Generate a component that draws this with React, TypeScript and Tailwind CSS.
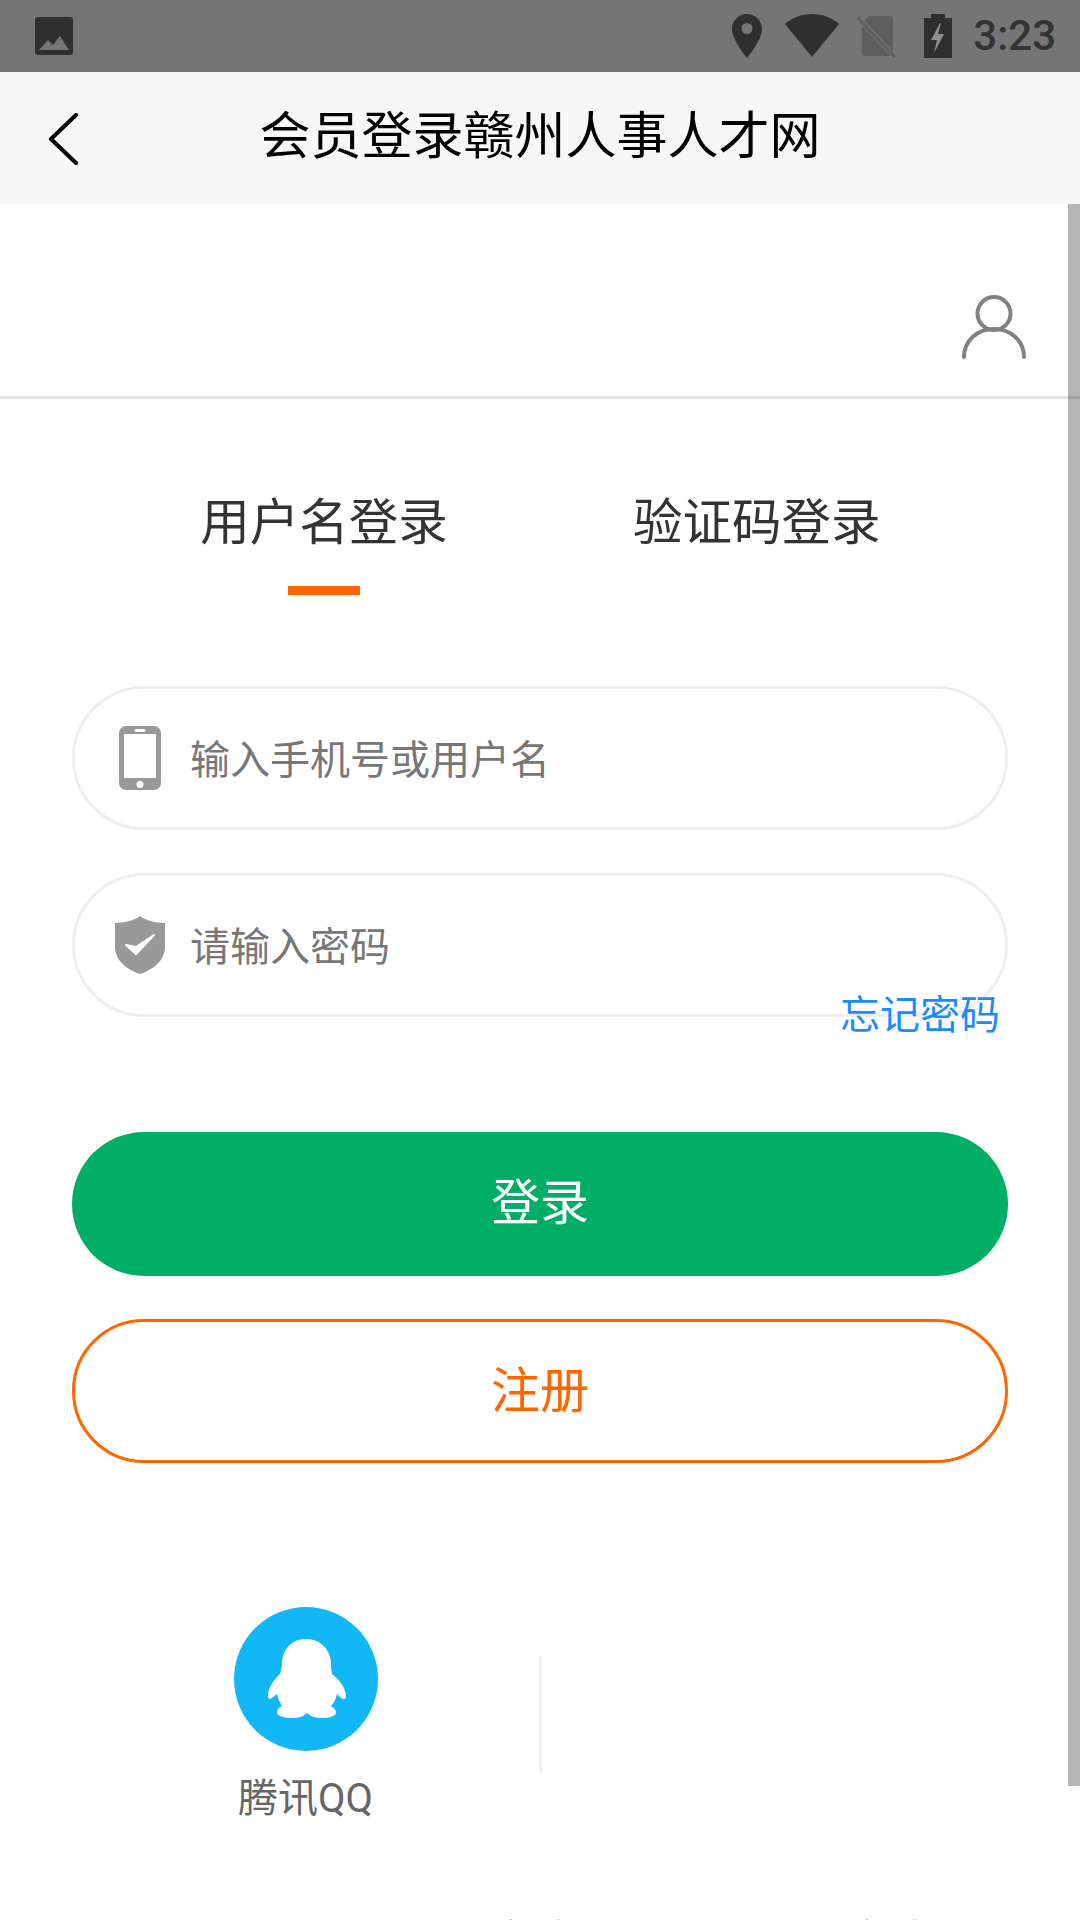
const cjk = "font-['Noto_Sans_CJK_SC','Noto_Sans',sans-serif]";

function StatusBar() {
  return (
    <div className="flex h-[72px] items-center bg-[#757575] pl-[35px] pr-[24px]">
      <svg width="38" height="38" viewBox="0 0 38 38">
        <rect width="38" height="38" rx="3" fill="#2f2f2f" />
        <path d="M4 33 L13 23 L18 28 L25 19 L34 33 Z" fill="#757575" />
      </svg>
      <div className="ml-auto flex items-center">
        <svg width="30" height="44" viewBox="0 0 30 44">
          <path fillRule="evenodd" d="M15 0C6.7 0 0 6.7 0 15c0 11 15 29 15 29s15-18 15-29C30 6.7 23.3 0 15 0Zm0 20a5.5 5.5 0 1 1 0-11 5.5 5.5 0 0 1 0 11Z" fill="#2f2f2f" />
        </svg>
        <svg className="ml-[23px]" width="54" height="44" viewBox="0 0 54 44">
          <path d="M0 10C7 4 16 0 27 0s20 4 27 10L27 43Z" fill="#2f2f2f" />
        </svg>
        <svg className="ml-[18px]" width="40" height="44" viewBox="0 0 40 44">
          <path d="M12 2h21a3 3 0 0 1 3 3v34a3 3 0 0 1-3 3H8a3 3 0 0 1-3-3V10Z" fill="#5e5e5e" />
          <path d="M1 4 L38 43" stroke="#757575" strokeWidth="5" />
          <path d="M1 4 L38 43" stroke="#5e5e5e" strokeWidth="3" />
        </svg>
        <svg className="ml-[27px]" width="28" height="44" viewBox="0 0 28 44">
          <path d="M7 0h14v4h7v40H0V4h7Z" fill="#2f2f2f" />
          <path d="M16 9L7 26h6l-3 13 10-19h-6l3-11Z" fill="#8f8f8f" />
        </svg>
        <span className="ml-[21px] font-['Roboto',sans-serif] text-[42px] leading-[48px] font-medium text-[#333333]">3:23</span>
      </div>
    </div>
  );
}

function Header() {
  return (
    <div className="relative flex h-[132px] items-center justify-center bg-[#f7f7f7] pb-[13px]">
      <svg className="absolute left-[47px] top-[41px]" width="34" height="52" viewBox="0 0 34 52">
        <path d="M29 2 L4 26 L29 50" fill="none" stroke="#000000" strokeWidth="4" strokeLinecap="round" strokeLinejoin="round" />
      </svg>
      <span className="text-[51px] leading-[60px] text-black">会员登录赣州人事人才网</span>
    </div>
  );
}

function PhoneIcon() {
  return (
    <svg width="42" height="64" viewBox="0 0 42 64">
      <path fillRule="evenodd" d="M7 0h28a7 7 0 0 1 7 7v50a7 7 0 0 1-7 7H7a7 7 0 0 1-7-7V7a7 7 0 0 1 7-7Zm-2 8v44h32V8Zm12-5a1 1 0 0 0 0 3h8a1 1 0 0 0 0-3Zm4 52a3.5 3.5 0 1 0 0 7 3.5 3.5 0 0 0 0-7Z" fill="#999999" />
    </svg>
  );
}

function ShieldIcon() {
  return (
    <svg width="50" height="58" viewBox="0 0 50 58">
      <path fillRule="evenodd" d="M25 0c5 4 15 7 25 7v24c0 14-13 23-25 27C13 54 0 45 0 31V7c10 0 20-3 25-7Z" fill="#999999" />
      <path d="M11 29 L21 38 L39 19 L21 31 Z" fill="#ffffff" stroke="#ffffff" strokeWidth="2" strokeLinejoin="round" />
    </svg>
  );
}

function Field({ icon, text, children }: { icon: React.ReactNode; text: string; children?: React.ReactNode }) {
  return (
    <div className="relative flex h-[144px] items-center rounded-full border-[3px] border-[#eeeeee] bg-white">
      <div className="flex w-[115px] shrink-0 justify-center pl-[15px]">{icon}</div>
      <span className="mb-[2px] text-[40px] leading-[48px] text-[#777777]">{text}</span>
      {children}
    </div>
  );
}

function QQPenguin() {
  return (
    <svg width="144" height="144" viewBox="0 0 144 144">
      <circle cx="72" cy="72" r="72" fill="#12b7f5" />
      <path
        d="M72 32C58 32 49 42 48 55C48 60 47 63 46 67C39 73 34 82 34 89C34 92 36 93 38 91L43 87C44 92 46 96 48 99C44 101 43 103 43 105C43 109 50 111 58 111C65 111 70 109 73 106C76 109 81 111 88 111C96 111 102 109 102 105C102 103 100 101 97 99C100 96 102 92 103 87L107 91C110 93 112 92 112 89C112 82 106 73 98 67C97 63 97 60 97 55C96 42 86 32 72 32Z"
        fill="#ffffff"
      />
    </svg>
  );
}

export default function App() {
  return (
    <div className={`relative h-[1920px] w-[1080px] overflow-hidden bg-white ${cjk}`}>
      <StatusBar />
      <Header />

      <div className="flex h-[195px] items-start justify-end border-b-[3px] border-[#e5e5e5] pr-[54px] pt-[91px]">
        <svg width="64" height="64" viewBox="0 0 64 64">
          <circle cx="32" cy="18.5" r="16.5" fill="none" stroke="#808080" strokeWidth="4" />
          <path d="M2 62C2 46 15 34 32 34s30 12 30 28" fill="none" stroke="#808080" strokeWidth="4" strokeLinecap="round" />
        </svg>
      </div>

      <div className="flex pl-[199px] pt-[90px]">
        <div className="flex w-[250px] flex-col items-center">
          <span className="text-[49.5px] leading-[60px] text-[#333333]">用户名登录</span>
          <div className="mt-[37px] h-[9px] w-[72px] bg-[#ff6600]" />
        </div>
        <span className="ml-[184px] text-[49.5px] leading-[60px] text-[#333333]">验证码登录</span>
      </div>

      <div className="flex flex-col px-[72px] pt-[91px]">
        <Field icon={<PhoneIcon />} text="输入手机号或用户名" />
        <div className="mt-[43px]">
          <Field icon={<ShieldIcon />} text="请输入密码">
            <span className="absolute right-[5px] top-[112px] text-[40px] leading-[48px] text-[#1a8cff]">忘记密码</span>
          </Field>
        </div>
        <div className="mt-[115px] flex h-[144px] items-center justify-center rounded-full bg-[#00ae66] pb-[10px] text-[49px] leading-[60px] text-white">登录</div>
        <div className="mt-[43px] flex h-[144px] items-center justify-center rounded-full border-[3px] border-[#ff6600] pb-[8px] text-[49px] leading-[60px] text-[#ff6600]">注册</div>
      </div>

      <div className="flex pl-[72px] pt-[144px]">
        <div className="flex w-[467px] flex-col items-center">
          <QQPenguin />
          <span className="mt-[24px] font-['Roboto','Noto_Sans_CJK_SC',sans-serif] text-[40px] leading-[48px] text-[#666666]">腾讯QQ</span>
        </div>
        <div className="mt-[49px] h-[116px] w-[3px] bg-[#eeeeee]" />
      </div>

      <div className="flex pl-[158px] pt-[86px] text-[48px] leading-[60px]">
        <span className="text-[#999999]">同</span>
        <span className="ml-[228px] text-[#ff6600]">关注我</span>
        <span className="ml-[212px] text-[#ff6600]">关注我</span>
      </div>

      <div className="absolute right-0 top-[204px] h-[1582px] w-[12px] bg-[#0000004a]" />
    </div>
  );
}
